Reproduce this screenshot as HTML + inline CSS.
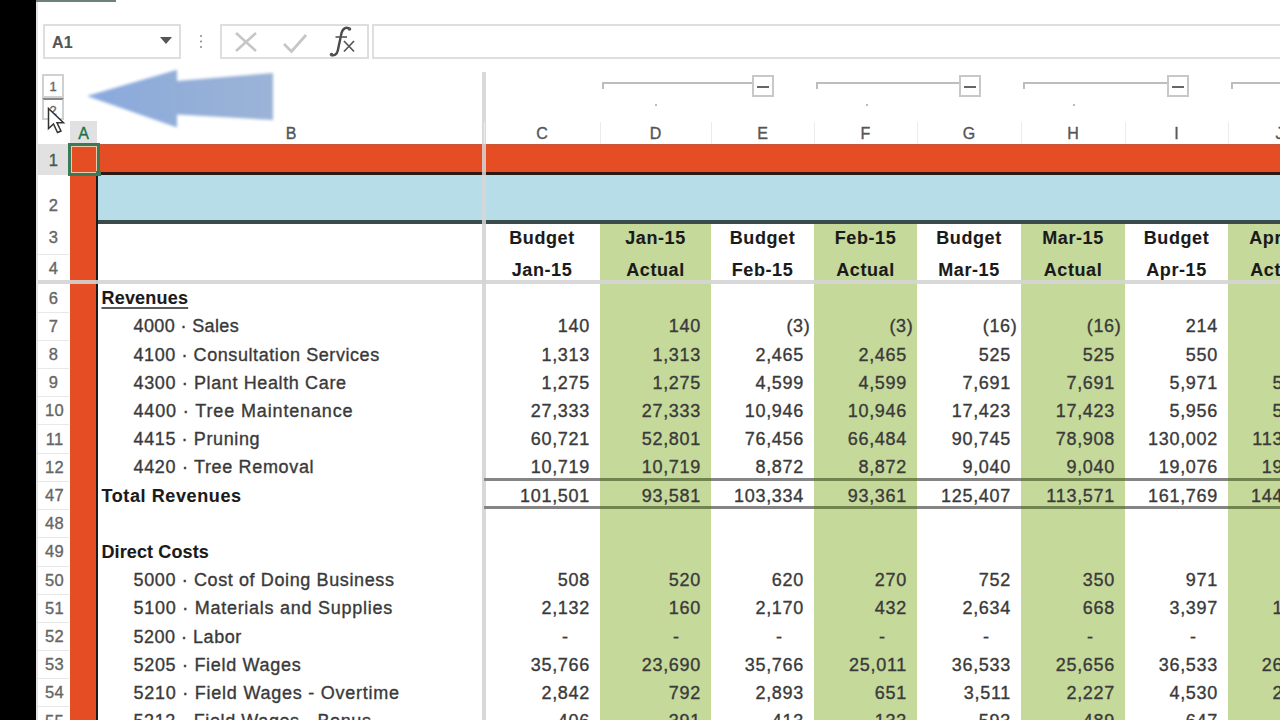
<!DOCTYPE html>
<html><head><meta charset="utf-8">
<style>
html,body{margin:0;padding:0;}
body{width:1280px;height:720px;overflow:hidden;position:relative;background:#fff;font-family:"Liberation Sans",sans-serif;}
.r{position:absolute;}
.t{position:absolute;white-space:nowrap;line-height:20px;-webkit-text-stroke:0.35px currentColor;}
</style></head><body>
<div class="r" style="left:0px;top:0px;width:36px;height:720px;background:#000;"></div>
<div class="r" style="left:36px;top:0px;width:2px;height:720px;background:#e3e3e3;"></div>
<div class="r" style="left:36px;top:0px;width:80px;height:2px;background:#6d8377;"></div>
<div class="r" style="left:43px;top:24px;width:134px;height:31px;border:2px solid #dedede;background:#fff;"></div>
<div class="t" style="left:52.0px;top:32.5px;font-size:16px;letter-spacing:0.2px;color:#555;font-weight:bold;-webkit-text-stroke:0.1px currentColor;">A1</div>
<svg class="r" style="left:160px;top:37px" width="12" height="8"><polygon points="0,0 12,0 6,7" fill="#555"/></svg>
<svg class="r" style="left:199px;top:34px" width="4" height="16"><circle cx="2" cy="2" r="1" fill="#888"/><circle cx="2" cy="7.5" r="1" fill="#888"/><circle cx="2" cy="13" r="1" fill="#888"/></svg>
<div class="r" style="left:220px;top:24px;width:145px;height:31px;border:2px solid #dedede;background:#fff;"></div>
<svg class="r" style="left:232px;top:30px" width="28" height="24"><path d="M4,3 L24,21 M24,3 L4,21" stroke="#c6c6c6" stroke-width="2.6"/></svg>
<svg class="r" style="left:281px;top:30px" width="30" height="24"><path d="M3,14 L10.5,21.5 L25,5" stroke="#c6c6c6" stroke-width="2.8" fill="none"/></svg>
<svg class="r" style="left:0;top:0" width="400" height="70"><path d="M350,29.5 C347,26.5 343,27.5 341.5,33 L337.8,50.5 C337,54 334.5,56 331,55" stroke="#4a4a4a" stroke-width="2.4" fill="none"/><circle cx="349.5" cy="29" r="1.8" fill="#555"/><circle cx="331.5" cy="54.5" r="1.8" fill="#555"/><path d="M335.5,37 L347,37" stroke="#555" stroke-width="1.6"/><path d="M344,41 L354,51.5 M354,41 L344,51.5" stroke="#555" stroke-width="1.7"/></svg>
<div class="r" style="left:372px;top:24px;width:920px;height:31px;border:2px solid #dedede;background:#fff;"></div>
<div class="r" style="left:42px;top:74px;width:18px;height:20px;border:2px solid #d0d0d0;background:#fff;"></div>
<div class="r" style="left:42px;top:98px;width:18px;height:18px;border:2px solid #d0d0d0;border-top:2px solid #888;background:#fff;"></div>
<div class="t" style="left:-97.0px;width:300px;text-align:center;top:77.0px;font-size:13px;letter-spacing:0px;color:#666;">1</div>
<div class="t" style="left:-97.0px;width:300px;text-align:center;top:100.5px;font-size:13px;letter-spacing:0px;color:#666;">2</div>
<div class="r" style="left:602px;top:82px;width:150px;height:2px;background:#bdbdbd;"></div>
<div class="r" style="left:602px;top:82px;width:2px;height:7px;background:#bdbdbd;"></div>
<div class="r" style="left:752px;top:75px;width:18px;height:18px;border:2px solid #c8c8c8;background:#fff;"></div>
<div class="r" style="left:757px;top:86px;width:12px;height:2px;background:#666;"></div>
<div class="r" style="left:816px;top:82px;width:143px;height:2px;background:#bdbdbd;"></div>
<div class="r" style="left:816px;top:82px;width:2px;height:7px;background:#bdbdbd;"></div>
<div class="r" style="left:959px;top:75px;width:18px;height:18px;border:2px solid #c8c8c8;background:#fff;"></div>
<div class="r" style="left:964px;top:86px;width:12px;height:2px;background:#666;"></div>
<div class="r" style="left:1023px;top:82px;width:144px;height:2px;background:#bdbdbd;"></div>
<div class="r" style="left:1023px;top:82px;width:2px;height:7px;background:#bdbdbd;"></div>
<div class="r" style="left:1167px;top:75px;width:18px;height:18px;border:2px solid #c8c8c8;background:#fff;"></div>
<div class="r" style="left:1172px;top:86px;width:12px;height:2px;background:#666;"></div>
<div class="r" style="left:1231px;top:82px;width:144px;height:2px;background:#bdbdbd;"></div>
<div class="r" style="left:1231px;top:82px;width:2px;height:7px;background:#bdbdbd;"></div>
<div class="r" style="left:1375px;top:75px;width:18px;height:18px;border:2px solid #c8c8c8;background:#fff;"></div>
<div class="r" style="left:1380px;top:86px;width:12px;height:2px;background:#666;"></div>
<div class="r" style="left:655px;top:104px;width:2px;height:2px;background:#bbb;"></div>
<div class="r" style="left:866px;top:104px;width:2px;height:2px;background:#bbb;"></div>
<div class="r" style="left:1073px;top:104px;width:2px;height:2px;background:#bbb;"></div>
<div class="r" style="left:482px;top:72px;width:4px;height:648px;background:#d9d9d9;"></div>
<div class="r" style="left:70px;top:121px;width:27px;height:23px;background:#e1e1e1;"></div>
<div class="t" style="left:-66.5px;width:300px;text-align:center;top:123.5px;font-size:16px;letter-spacing:0px;color:#217346;">A</div>
<div class="t" style="left:392.0px;width:300px;text-align:center;top:124.0px;font-size:16px;letter-spacing:0px;color:#555;">C</div>
<div class="r" style="left:484px;top:122px;width:1px;height:22px;background:#ececec;"></div>
<div class="t" style="left:505.5px;width:300px;text-align:center;top:124.0px;font-size:16px;letter-spacing:0px;color:#555;">D</div>
<div class="r" style="left:600px;top:122px;width:1px;height:22px;background:#ececec;"></div>
<div class="t" style="left:612.5px;width:300px;text-align:center;top:124.0px;font-size:16px;letter-spacing:0px;color:#555;">E</div>
<div class="r" style="left:711px;top:122px;width:1px;height:22px;background:#ececec;"></div>
<div class="t" style="left:715.5px;width:300px;text-align:center;top:124.0px;font-size:16px;letter-spacing:0px;color:#555;">F</div>
<div class="r" style="left:814px;top:122px;width:1px;height:22px;background:#ececec;"></div>
<div class="t" style="left:819.0px;width:300px;text-align:center;top:124.0px;font-size:16px;letter-spacing:0px;color:#555;">G</div>
<div class="r" style="left:917px;top:122px;width:1px;height:22px;background:#ececec;"></div>
<div class="t" style="left:923.0px;width:300px;text-align:center;top:124.0px;font-size:16px;letter-spacing:0px;color:#555;">H</div>
<div class="r" style="left:1021px;top:122px;width:1px;height:22px;background:#ececec;"></div>
<div class="t" style="left:1026.5px;width:300px;text-align:center;top:124.0px;font-size:16px;letter-spacing:0px;color:#555;">I</div>
<div class="r" style="left:1125px;top:122px;width:1px;height:22px;background:#ececec;"></div>
<div class="t" style="left:1129.5px;width:300px;text-align:center;top:124.0px;font-size:16px;letter-spacing:0px;color:#555;">J</div>
<div class="r" style="left:1228px;top:122px;width:1px;height:22px;background:#ececec;"></div>
<div class="t" style="left:141.0px;width:300px;text-align:center;top:124.0px;font-size:16px;letter-spacing:0px;color:#555;">B</div>
<div class="r" style="left:38px;top:144px;width:31px;height:31px;background:#e1e1e1;"></div>
<div class="r" style="left:70px;top:144px;width:1210px;height:28px;background:#e54d25;"></div>
<div class="r" style="left:98px;top:144px;width:1182px;height:2px;background:#c9553a;"></div>
<div class="r" style="left:98px;top:172px;width:1182px;height:3px;background:#2b1a14;"></div>
<div class="r" style="left:98px;top:175px;width:1182px;height:45px;background:#b7dee8;"></div>
<div class="r" style="left:98px;top:220px;width:1182px;height:4px;background:#3b4b4b;"></div>
<div class="r" style="left:70px;top:144px;width:27px;height:576px;background:#e54d25;"></div>
<div class="r" style="left:96px;top:172px;width:2px;height:548px;background:#1a1a1a;"></div>
<div class="r" style="left:600px;top:224px;width:111px;height:496px;background:#c5d99b;"></div>
<div class="r" style="left:814px;top:224px;width:103px;height:496px;background:#c5d99b;"></div>
<div class="r" style="left:1021px;top:224px;width:104px;height:496px;background:#c5d99b;"></div>
<div class="r" style="left:1228px;top:224px;width:103px;height:496px;background:#c5d99b;"></div>
<div class="r" style="left:482px;top:144px;width:4px;height:576px;background:rgba(215,215,215,0.85);"></div>
<div class="r" style="left:38px;top:280px;width:1242px;height:4px;background:rgba(212,212,212,0.9);"></div>
<div class="t" style="left:-96.5px;width:300px;text-align:center;top:150.1px;font-size:16.5px;letter-spacing:0.3px;color:#3f5f4c;">1</div>
<div class="t" style="left:-96.5px;width:300px;text-align:center;top:194.6px;font-size:16.5px;letter-spacing:0.3px;color:#666;">2</div>
<div class="t" style="left:-96.5px;width:300px;text-align:center;top:227.0px;font-size:16.5px;letter-spacing:0.3px;color:#666;">3</div>
<div class="t" style="left:-96.5px;width:300px;text-align:center;top:257.7px;font-size:16.5px;letter-spacing:0.3px;color:#666;">4</div>
<div class="t" style="left:-96.5px;width:300px;text-align:center;top:287.5px;font-size:16.5px;letter-spacing:0.3px;color:#666;">6</div>
<div class="t" style="left:-96.5px;width:300px;text-align:center;top:315.7px;font-size:16.5px;letter-spacing:0.3px;color:#666;">7</div>
<div class="t" style="left:-96.5px;width:300px;text-align:center;top:343.9px;font-size:16.5px;letter-spacing:0.3px;color:#666;">8</div>
<div class="t" style="left:-96.5px;width:300px;text-align:center;top:372.1px;font-size:16.5px;letter-spacing:0.3px;color:#666;">9</div>
<div class="t" style="left:-95.5px;width:300px;text-align:center;top:400.3px;font-size:16.5px;letter-spacing:0.3px;color:#666;">10</div>
<div class="t" style="left:-95.5px;width:300px;text-align:center;top:428.5px;font-size:16.5px;letter-spacing:0.3px;color:#666;">11</div>
<div class="t" style="left:-95.5px;width:300px;text-align:center;top:456.7px;font-size:16.5px;letter-spacing:0.3px;color:#666;">12</div>
<div class="t" style="left:-95.5px;width:300px;text-align:center;top:484.9px;font-size:16.5px;letter-spacing:0.3px;color:#666;">47</div>
<div class="t" style="left:-95.5px;width:300px;text-align:center;top:513.1px;font-size:16.5px;letter-spacing:0.3px;color:#666;">48</div>
<div class="t" style="left:-95.5px;width:300px;text-align:center;top:541.3px;font-size:16.5px;letter-spacing:0.3px;color:#666;">49</div>
<div class="t" style="left:-95.5px;width:300px;text-align:center;top:569.5px;font-size:16.5px;letter-spacing:0.3px;color:#666;">50</div>
<div class="t" style="left:-95.5px;width:300px;text-align:center;top:597.7px;font-size:16.5px;letter-spacing:0.3px;color:#666;">51</div>
<div class="t" style="left:-95.5px;width:300px;text-align:center;top:625.9px;font-size:16.5px;letter-spacing:0.3px;color:#666;">52</div>
<div class="t" style="left:-95.5px;width:300px;text-align:center;top:654.1px;font-size:16.5px;letter-spacing:0.3px;color:#666;">53</div>
<div class="t" style="left:-95.5px;width:300px;text-align:center;top:682.3px;font-size:16.5px;letter-spacing:0.3px;color:#666;">54</div>
<div class="t" style="left:-95.5px;width:300px;text-align:center;top:710.5px;font-size:16.5px;letter-spacing:0.3px;color:#666;">55</div>
<div class="r" style="left:38px;top:254px;width:31px;height:1px;background:#e8e8e8;"></div>
<div class="r" style="left:38px;top:312px;width:31px;height:1px;background:#e8e8e8;"></div>
<div class="r" style="left:38px;top:340px;width:31px;height:1px;background:#e8e8e8;"></div>
<div class="r" style="left:38px;top:368px;width:31px;height:1px;background:#e8e8e8;"></div>
<div class="r" style="left:38px;top:396px;width:31px;height:1px;background:#e8e8e8;"></div>
<div class="r" style="left:38px;top:424px;width:31px;height:1px;background:#e8e8e8;"></div>
<div class="r" style="left:38px;top:453px;width:31px;height:1px;background:#e8e8e8;"></div>
<div class="r" style="left:38px;top:481px;width:31px;height:1px;background:#e8e8e8;"></div>
<div class="r" style="left:38px;top:509px;width:31px;height:1px;background:#e8e8e8;"></div>
<div class="r" style="left:38px;top:537px;width:31px;height:1px;background:#e8e8e8;"></div>
<div class="r" style="left:38px;top:566px;width:31px;height:1px;background:#e8e8e8;"></div>
<div class="r" style="left:38px;top:594px;width:31px;height:1px;background:#e8e8e8;"></div>
<div class="r" style="left:38px;top:622px;width:31px;height:1px;background:#e8e8e8;"></div>
<div class="r" style="left:38px;top:650px;width:31px;height:1px;background:#e8e8e8;"></div>
<div class="r" style="left:38px;top:678px;width:31px;height:1px;background:#e8e8e8;"></div>
<div class="r" style="left:38px;top:706px;width:31px;height:1px;background:#e8e8e8;"></div>
<div class="r" style="left:38px;top:735px;width:31px;height:1px;background:#e8e8e8;"></div>
<div class="t" style="left:392.0px;width:300px;text-align:center;top:227.6px;font-size:18px;letter-spacing:0.6px;color:#1a1a1a;font-weight:bold;-webkit-text-stroke:0.1px currentColor;">Budget</div>
<div class="t" style="left:392.0px;width:300px;text-align:center;top:259.7px;font-size:18px;letter-spacing:0.6px;color:#1a1a1a;font-weight:bold;-webkit-text-stroke:0.1px currentColor;">Jan-15</div>
<div class="t" style="left:505.5px;width:300px;text-align:center;top:227.6px;font-size:18px;letter-spacing:0.6px;color:#1a1a1a;font-weight:bold;-webkit-text-stroke:0.1px currentColor;">Jan-15</div>
<div class="t" style="left:505.5px;width:300px;text-align:center;top:259.7px;font-size:18px;letter-spacing:0.6px;color:#1a1a1a;font-weight:bold;-webkit-text-stroke:0.1px currentColor;">Actual</div>
<div class="t" style="left:612.5px;width:300px;text-align:center;top:227.6px;font-size:18px;letter-spacing:0.6px;color:#1a1a1a;font-weight:bold;-webkit-text-stroke:0.1px currentColor;">Budget</div>
<div class="t" style="left:612.5px;width:300px;text-align:center;top:259.7px;font-size:18px;letter-spacing:0.6px;color:#1a1a1a;font-weight:bold;-webkit-text-stroke:0.1px currentColor;">Feb-15</div>
<div class="t" style="left:715.5px;width:300px;text-align:center;top:227.6px;font-size:18px;letter-spacing:0.6px;color:#1a1a1a;font-weight:bold;-webkit-text-stroke:0.1px currentColor;">Feb-15</div>
<div class="t" style="left:715.5px;width:300px;text-align:center;top:259.7px;font-size:18px;letter-spacing:0.6px;color:#1a1a1a;font-weight:bold;-webkit-text-stroke:0.1px currentColor;">Actual</div>
<div class="t" style="left:819.0px;width:300px;text-align:center;top:227.6px;font-size:18px;letter-spacing:0.6px;color:#1a1a1a;font-weight:bold;-webkit-text-stroke:0.1px currentColor;">Budget</div>
<div class="t" style="left:819.0px;width:300px;text-align:center;top:259.7px;font-size:18px;letter-spacing:0.6px;color:#1a1a1a;font-weight:bold;-webkit-text-stroke:0.1px currentColor;">Mar-15</div>
<div class="t" style="left:923.0px;width:300px;text-align:center;top:227.6px;font-size:18px;letter-spacing:0.6px;color:#1a1a1a;font-weight:bold;-webkit-text-stroke:0.1px currentColor;">Mar-15</div>
<div class="t" style="left:923.0px;width:300px;text-align:center;top:259.7px;font-size:18px;letter-spacing:0.6px;color:#1a1a1a;font-weight:bold;-webkit-text-stroke:0.1px currentColor;">Actual</div>
<div class="t" style="left:1026.5px;width:300px;text-align:center;top:227.6px;font-size:18px;letter-spacing:0.6px;color:#1a1a1a;font-weight:bold;-webkit-text-stroke:0.1px currentColor;">Budget</div>
<div class="t" style="left:1026.5px;width:300px;text-align:center;top:259.7px;font-size:18px;letter-spacing:0.6px;color:#1a1a1a;font-weight:bold;-webkit-text-stroke:0.1px currentColor;">Apr-15</div>
<div class="t" style="left:1129.5px;width:300px;text-align:center;top:227.6px;font-size:18px;letter-spacing:0.6px;color:#1a1a1a;font-weight:bold;-webkit-text-stroke:0.1px currentColor;">Apr-15</div>
<div class="t" style="left:1129.5px;width:300px;text-align:center;top:259.7px;font-size:18px;letter-spacing:0.6px;color:#1a1a1a;font-weight:bold;-webkit-text-stroke:0.1px currentColor;">Actual</div>
<div class="t" style="left:101.5px;top:288.2px;font-size:18px;letter-spacing:0.2px;color:#1a1a1a;font-weight:bold;-webkit-text-stroke:0.1px currentColor;text-decoration:underline;text-decoration-color:#5a5a5a;text-underline-offset:3px;text-decoration-thickness:2px;">Revenues</div>
<div class="t" style="left:133.5px;top:316.4px;font-size:18px;letter-spacing:0.38px;color:#3a3a3a;">4000 · Sales</div>
<div class="t" style="left:290.0px;width:300px;text-align:right;top:316.4px;font-size:18px;letter-spacing:0.7px;color:#3a3a3a;">140</div>
<div class="t" style="left:401.0px;width:300px;text-align:right;top:316.4px;font-size:18px;letter-spacing:0.7px;color:#3a3a3a;">140</div>
<div class="t" style="left:510.5px;width:300px;text-align:right;top:316.4px;font-size:18px;letter-spacing:0.7px;color:#3a3a3a;">(3)</div>
<div class="t" style="left:613.5px;width:300px;text-align:right;top:316.4px;font-size:18px;letter-spacing:0.7px;color:#3a3a3a;">(3)</div>
<div class="t" style="left:717.5px;width:300px;text-align:right;top:316.4px;font-size:18px;letter-spacing:0.7px;color:#3a3a3a;">(16)</div>
<div class="t" style="left:821.5px;width:300px;text-align:right;top:316.4px;font-size:18px;letter-spacing:0.7px;color:#3a3a3a;">(16)</div>
<div class="t" style="left:918.0px;width:300px;text-align:right;top:316.4px;font-size:18px;letter-spacing:0.7px;color:#3a3a3a;">214</div>
<div class="t" style="left:1021.0px;width:300px;text-align:right;top:316.4px;font-size:18px;letter-spacing:0.7px;color:#3a3a3a;">214</div>
<div class="t" style="left:133.5px;top:344.6px;font-size:18px;letter-spacing:0.577px;color:#3a3a3a;">4100 · Consultation Services</div>
<div class="t" style="left:290.0px;width:300px;text-align:right;top:344.6px;font-size:18px;letter-spacing:0.7px;color:#3a3a3a;">1,313</div>
<div class="t" style="left:401.0px;width:300px;text-align:right;top:344.6px;font-size:18px;letter-spacing:0.7px;color:#3a3a3a;">1,313</div>
<div class="t" style="left:504.0px;width:300px;text-align:right;top:344.6px;font-size:18px;letter-spacing:0.7px;color:#3a3a3a;">2,465</div>
<div class="t" style="left:607.0px;width:300px;text-align:right;top:344.6px;font-size:18px;letter-spacing:0.7px;color:#3a3a3a;">2,465</div>
<div class="t" style="left:711.0px;width:300px;text-align:right;top:344.6px;font-size:18px;letter-spacing:0.7px;color:#3a3a3a;">525</div>
<div class="t" style="left:815.0px;width:300px;text-align:right;top:344.6px;font-size:18px;letter-spacing:0.7px;color:#3a3a3a;">525</div>
<div class="t" style="left:918.0px;width:300px;text-align:right;top:344.6px;font-size:18px;letter-spacing:0.7px;color:#3a3a3a;">550</div>
<div class="t" style="left:1021.0px;width:300px;text-align:right;top:344.6px;font-size:18px;letter-spacing:0.7px;color:#3a3a3a;">550</div>
<div class="t" style="left:133.5px;top:372.8px;font-size:18px;letter-spacing:0.626px;color:#3a3a3a;">4300 · Plant Health Care</div>
<div class="t" style="left:290.0px;width:300px;text-align:right;top:372.8px;font-size:18px;letter-spacing:0.7px;color:#3a3a3a;">1,275</div>
<div class="t" style="left:401.0px;width:300px;text-align:right;top:372.8px;font-size:18px;letter-spacing:0.7px;color:#3a3a3a;">1,275</div>
<div class="t" style="left:504.0px;width:300px;text-align:right;top:372.8px;font-size:18px;letter-spacing:0.7px;color:#3a3a3a;">4,599</div>
<div class="t" style="left:607.0px;width:300px;text-align:right;top:372.8px;font-size:18px;letter-spacing:0.7px;color:#3a3a3a;">4,599</div>
<div class="t" style="left:711.0px;width:300px;text-align:right;top:372.8px;font-size:18px;letter-spacing:0.7px;color:#3a3a3a;">7,691</div>
<div class="t" style="left:815.0px;width:300px;text-align:right;top:372.8px;font-size:18px;letter-spacing:0.7px;color:#3a3a3a;">7,691</div>
<div class="t" style="left:918.0px;width:300px;text-align:right;top:372.8px;font-size:18px;letter-spacing:0.7px;color:#3a3a3a;">5,971</div>
<div class="t" style="left:1021.0px;width:300px;text-align:right;top:372.8px;font-size:18px;letter-spacing:0.7px;color:#3a3a3a;">5,971</div>
<div class="t" style="left:133.5px;top:401.0px;font-size:18px;letter-spacing:0.863px;color:#3a3a3a;">4400 · Tree Maintenance</div>
<div class="t" style="left:290.0px;width:300px;text-align:right;top:401.0px;font-size:18px;letter-spacing:0.7px;color:#3a3a3a;">27,333</div>
<div class="t" style="left:401.0px;width:300px;text-align:right;top:401.0px;font-size:18px;letter-spacing:0.7px;color:#3a3a3a;">27,333</div>
<div class="t" style="left:504.0px;width:300px;text-align:right;top:401.0px;font-size:18px;letter-spacing:0.7px;color:#3a3a3a;">10,946</div>
<div class="t" style="left:607.0px;width:300px;text-align:right;top:401.0px;font-size:18px;letter-spacing:0.7px;color:#3a3a3a;">10,946</div>
<div class="t" style="left:711.0px;width:300px;text-align:right;top:401.0px;font-size:18px;letter-spacing:0.7px;color:#3a3a3a;">17,423</div>
<div class="t" style="left:815.0px;width:300px;text-align:right;top:401.0px;font-size:18px;letter-spacing:0.7px;color:#3a3a3a;">17,423</div>
<div class="t" style="left:918.0px;width:300px;text-align:right;top:401.0px;font-size:18px;letter-spacing:0.7px;color:#3a3a3a;">5,956</div>
<div class="t" style="left:1021.0px;width:300px;text-align:right;top:401.0px;font-size:18px;letter-spacing:0.7px;color:#3a3a3a;">5,956</div>
<div class="t" style="left:133.5px;top:429.2px;font-size:18px;letter-spacing:0.615px;color:#3a3a3a;">4415 · Pruning</div>
<div class="t" style="left:290.0px;width:300px;text-align:right;top:429.2px;font-size:18px;letter-spacing:0.7px;color:#3a3a3a;">60,721</div>
<div class="t" style="left:401.0px;width:300px;text-align:right;top:429.2px;font-size:18px;letter-spacing:0.7px;color:#3a3a3a;">52,801</div>
<div class="t" style="left:504.0px;width:300px;text-align:right;top:429.2px;font-size:18px;letter-spacing:0.7px;color:#3a3a3a;">76,456</div>
<div class="t" style="left:607.0px;width:300px;text-align:right;top:429.2px;font-size:18px;letter-spacing:0.7px;color:#3a3a3a;">66,484</div>
<div class="t" style="left:711.0px;width:300px;text-align:right;top:429.2px;font-size:18px;letter-spacing:0.7px;color:#3a3a3a;">90,745</div>
<div class="t" style="left:815.0px;width:300px;text-align:right;top:429.2px;font-size:18px;letter-spacing:0.7px;color:#3a3a3a;">78,908</div>
<div class="t" style="left:918.0px;width:300px;text-align:right;top:429.2px;font-size:18px;letter-spacing:0.7px;color:#3a3a3a;">130,002</div>
<div class="t" style="left:1021.0px;width:300px;text-align:right;top:429.2px;font-size:18px;letter-spacing:0.7px;color:#3a3a3a;">113,502</div>
<div class="t" style="left:133.5px;top:457.4px;font-size:18px;letter-spacing:0.668px;color:#3a3a3a;">4420 · Tree Removal</div>
<div class="t" style="left:290.0px;width:300px;text-align:right;top:457.4px;font-size:18px;letter-spacing:0.7px;color:#3a3a3a;">10,719</div>
<div class="t" style="left:401.0px;width:300px;text-align:right;top:457.4px;font-size:18px;letter-spacing:0.7px;color:#3a3a3a;">10,719</div>
<div class="t" style="left:504.0px;width:300px;text-align:right;top:457.4px;font-size:18px;letter-spacing:0.7px;color:#3a3a3a;">8,872</div>
<div class="t" style="left:607.0px;width:300px;text-align:right;top:457.4px;font-size:18px;letter-spacing:0.7px;color:#3a3a3a;">8,872</div>
<div class="t" style="left:711.0px;width:300px;text-align:right;top:457.4px;font-size:18px;letter-spacing:0.7px;color:#3a3a3a;">9,040</div>
<div class="t" style="left:815.0px;width:300px;text-align:right;top:457.4px;font-size:18px;letter-spacing:0.7px;color:#3a3a3a;">9,040</div>
<div class="t" style="left:918.0px;width:300px;text-align:right;top:457.4px;font-size:18px;letter-spacing:0.7px;color:#3a3a3a;">19,076</div>
<div class="t" style="left:1021.0px;width:300px;text-align:right;top:457.4px;font-size:18px;letter-spacing:0.7px;color:#3a3a3a;">19,076</div>
<div class="t" style="left:101.5px;top:485.6px;font-size:18px;letter-spacing:0.6px;color:#1a1a1a;font-weight:bold;-webkit-text-stroke:0.1px currentColor;">Total Revenues</div>
<div class="t" style="left:290.0px;width:300px;text-align:right;top:485.6px;font-size:18px;letter-spacing:0.7px;color:#3a3a3a;">101,501</div>
<div class="t" style="left:401.0px;width:300px;text-align:right;top:485.6px;font-size:18px;letter-spacing:0.7px;color:#3a3a3a;">93,581</div>
<div class="t" style="left:504.0px;width:300px;text-align:right;top:485.6px;font-size:18px;letter-spacing:0.7px;color:#3a3a3a;">103,334</div>
<div class="t" style="left:607.0px;width:300px;text-align:right;top:485.6px;font-size:18px;letter-spacing:0.7px;color:#3a3a3a;">93,361</div>
<div class="t" style="left:711.0px;width:300px;text-align:right;top:485.6px;font-size:18px;letter-spacing:0.7px;color:#3a3a3a;">125,407</div>
<div class="t" style="left:815.0px;width:300px;text-align:right;top:485.6px;font-size:18px;letter-spacing:0.7px;color:#3a3a3a;">113,571</div>
<div class="t" style="left:918.0px;width:300px;text-align:right;top:485.6px;font-size:18px;letter-spacing:0.7px;color:#3a3a3a;">161,769</div>
<div class="t" style="left:1021.0px;width:300px;text-align:right;top:485.6px;font-size:18px;letter-spacing:0.7px;color:#3a3a3a;">144,270</div>
<div class="t" style="left:101.5px;top:542.0px;font-size:18px;letter-spacing:0.11px;color:#1a1a1a;font-weight:bold;-webkit-text-stroke:0.1px currentColor;">Direct Costs</div>
<div class="t" style="left:133.5px;top:570.2px;font-size:18px;letter-spacing:0.62px;color:#3a3a3a;">5000 · Cost of Doing Business</div>
<div class="t" style="left:290.0px;width:300px;text-align:right;top:570.2px;font-size:18px;letter-spacing:0.7px;color:#3a3a3a;">508</div>
<div class="t" style="left:401.0px;width:300px;text-align:right;top:570.2px;font-size:18px;letter-spacing:0.7px;color:#3a3a3a;">520</div>
<div class="t" style="left:504.0px;width:300px;text-align:right;top:570.2px;font-size:18px;letter-spacing:0.7px;color:#3a3a3a;">620</div>
<div class="t" style="left:607.0px;width:300px;text-align:right;top:570.2px;font-size:18px;letter-spacing:0.7px;color:#3a3a3a;">270</div>
<div class="t" style="left:711.0px;width:300px;text-align:right;top:570.2px;font-size:18px;letter-spacing:0.7px;color:#3a3a3a;">752</div>
<div class="t" style="left:815.0px;width:300px;text-align:right;top:570.2px;font-size:18px;letter-spacing:0.7px;color:#3a3a3a;">350</div>
<div class="t" style="left:918.0px;width:300px;text-align:right;top:570.2px;font-size:18px;letter-spacing:0.7px;color:#3a3a3a;">971</div>
<div class="t" style="left:1021.0px;width:300px;text-align:right;top:570.2px;font-size:18px;letter-spacing:0.7px;color:#3a3a3a;">480</div>
<div class="t" style="left:133.5px;top:598.4px;font-size:18px;letter-spacing:0.734px;color:#3a3a3a;">5100 · Materials and Supplies</div>
<div class="t" style="left:290.0px;width:300px;text-align:right;top:598.4px;font-size:18px;letter-spacing:0.7px;color:#3a3a3a;">2,132</div>
<div class="t" style="left:401.0px;width:300px;text-align:right;top:598.4px;font-size:18px;letter-spacing:0.7px;color:#3a3a3a;">160</div>
<div class="t" style="left:504.0px;width:300px;text-align:right;top:598.4px;font-size:18px;letter-spacing:0.7px;color:#3a3a3a;">2,170</div>
<div class="t" style="left:607.0px;width:300px;text-align:right;top:598.4px;font-size:18px;letter-spacing:0.7px;color:#3a3a3a;">432</div>
<div class="t" style="left:711.0px;width:300px;text-align:right;top:598.4px;font-size:18px;letter-spacing:0.7px;color:#3a3a3a;">2,634</div>
<div class="t" style="left:815.0px;width:300px;text-align:right;top:598.4px;font-size:18px;letter-spacing:0.7px;color:#3a3a3a;">668</div>
<div class="t" style="left:918.0px;width:300px;text-align:right;top:598.4px;font-size:18px;letter-spacing:0.7px;color:#3a3a3a;">3,397</div>
<div class="t" style="left:1021.0px;width:300px;text-align:right;top:598.4px;font-size:18px;letter-spacing:0.7px;color:#3a3a3a;">1,240</div>
<div class="t" style="left:133.5px;top:626.6px;font-size:18px;letter-spacing:0.508px;color:#3a3a3a;">5200 · Labor</div>
<div class="t" style="left:415.0px;width:300px;text-align:center;top:626.6px;font-size:18px;letter-spacing:0px;color:#3a3a3a;">-</div>
<div class="t" style="left:526.0px;width:300px;text-align:center;top:626.6px;font-size:18px;letter-spacing:0px;color:#3a3a3a;">-</div>
<div class="t" style="left:629.0px;width:300px;text-align:center;top:626.6px;font-size:18px;letter-spacing:0px;color:#3a3a3a;">-</div>
<div class="t" style="left:732.0px;width:300px;text-align:center;top:626.6px;font-size:18px;letter-spacing:0px;color:#3a3a3a;">-</div>
<div class="t" style="left:836.0px;width:300px;text-align:center;top:626.6px;font-size:18px;letter-spacing:0px;color:#3a3a3a;">-</div>
<div class="t" style="left:940.0px;width:300px;text-align:center;top:626.6px;font-size:18px;letter-spacing:0px;color:#3a3a3a;">-</div>
<div class="t" style="left:1043.0px;width:300px;text-align:center;top:626.6px;font-size:18px;letter-spacing:0px;color:#3a3a3a;">-</div>
<div class="t" style="left:1146.0px;width:300px;text-align:center;top:626.6px;font-size:18px;letter-spacing:0px;color:#3a3a3a;">-</div>
<div class="t" style="left:133.5px;top:654.8px;font-size:18px;letter-spacing:0.694px;color:#3a3a3a;">5205 · Field Wages</div>
<div class="t" style="left:290.0px;width:300px;text-align:right;top:654.8px;font-size:18px;letter-spacing:0.7px;color:#3a3a3a;">35,766</div>
<div class="t" style="left:401.0px;width:300px;text-align:right;top:654.8px;font-size:18px;letter-spacing:0.7px;color:#3a3a3a;">23,690</div>
<div class="t" style="left:504.0px;width:300px;text-align:right;top:654.8px;font-size:18px;letter-spacing:0.7px;color:#3a3a3a;">35,766</div>
<div class="t" style="left:607.0px;width:300px;text-align:right;top:654.8px;font-size:18px;letter-spacing:0.7px;color:#3a3a3a;">25,011</div>
<div class="t" style="left:711.0px;width:300px;text-align:right;top:654.8px;font-size:18px;letter-spacing:0.7px;color:#3a3a3a;">36,533</div>
<div class="t" style="left:815.0px;width:300px;text-align:right;top:654.8px;font-size:18px;letter-spacing:0.7px;color:#3a3a3a;">25,656</div>
<div class="t" style="left:918.0px;width:300px;text-align:right;top:654.8px;font-size:18px;letter-spacing:0.7px;color:#3a3a3a;">36,533</div>
<div class="t" style="left:1021.0px;width:300px;text-align:right;top:654.8px;font-size:18px;letter-spacing:0.7px;color:#3a3a3a;">26,120</div>
<div class="t" style="left:133.5px;top:683.0px;font-size:18px;letter-spacing:0.757px;color:#3a3a3a;">5210 · Field Wages - Overtime</div>
<div class="t" style="left:290.0px;width:300px;text-align:right;top:683.0px;font-size:18px;letter-spacing:0.7px;color:#3a3a3a;">2,842</div>
<div class="t" style="left:401.0px;width:300px;text-align:right;top:683.0px;font-size:18px;letter-spacing:0.7px;color:#3a3a3a;">792</div>
<div class="t" style="left:504.0px;width:300px;text-align:right;top:683.0px;font-size:18px;letter-spacing:0.7px;color:#3a3a3a;">2,893</div>
<div class="t" style="left:607.0px;width:300px;text-align:right;top:683.0px;font-size:18px;letter-spacing:0.7px;color:#3a3a3a;">651</div>
<div class="t" style="left:711.0px;width:300px;text-align:right;top:683.0px;font-size:18px;letter-spacing:0.7px;color:#3a3a3a;">3,511</div>
<div class="t" style="left:815.0px;width:300px;text-align:right;top:683.0px;font-size:18px;letter-spacing:0.7px;color:#3a3a3a;">2,227</div>
<div class="t" style="left:918.0px;width:300px;text-align:right;top:683.0px;font-size:18px;letter-spacing:0.7px;color:#3a3a3a;">4,530</div>
<div class="t" style="left:1021.0px;width:300px;text-align:right;top:683.0px;font-size:18px;letter-spacing:0.7px;color:#3a3a3a;">2,140</div>
<div class="t" style="left:133.5px;top:711.2px;font-size:18px;letter-spacing:0.6px;color:#3a3a3a;">5212 · Field Wages - Bonus</div>
<div class="t" style="left:290.0px;width:300px;text-align:right;top:711.2px;font-size:18px;letter-spacing:0.7px;color:#3a3a3a;">406</div>
<div class="t" style="left:401.0px;width:300px;text-align:right;top:711.2px;font-size:18px;letter-spacing:0.7px;color:#3a3a3a;">391</div>
<div class="t" style="left:504.0px;width:300px;text-align:right;top:711.2px;font-size:18px;letter-spacing:0.7px;color:#3a3a3a;">413</div>
<div class="t" style="left:607.0px;width:300px;text-align:right;top:711.2px;font-size:18px;letter-spacing:0.7px;color:#3a3a3a;">133</div>
<div class="t" style="left:711.0px;width:300px;text-align:right;top:711.2px;font-size:18px;letter-spacing:0.7px;color:#3a3a3a;">593</div>
<div class="t" style="left:815.0px;width:300px;text-align:right;top:711.2px;font-size:18px;letter-spacing:0.7px;color:#3a3a3a;">489</div>
<div class="t" style="left:918.0px;width:300px;text-align:right;top:711.2px;font-size:18px;letter-spacing:0.7px;color:#3a3a3a;">647</div>
<div class="t" style="left:1021.0px;width:300px;text-align:right;top:711.2px;font-size:18px;letter-spacing:0.7px;color:#3a3a3a;">410</div>
<div class="r" style="left:484px;top:478px;width:796px;height:3px;background:#858585;"></div>
<div class="r" style="left:600px;top:478px;width:111px;height:3px;background:#71844f;"></div>
<div class="r" style="left:814px;top:478px;width:103px;height:3px;background:#71844f;"></div>
<div class="r" style="left:1021px;top:478px;width:104px;height:3px;background:#71844f;"></div>
<div class="r" style="left:1228px;top:478px;width:52px;height:3px;background:#71844f;"></div>
<div class="r" style="left:484px;top:506px;width:796px;height:3px;background:#858585;"></div>
<div class="r" style="left:600px;top:506px;width:111px;height:3px;background:#71844f;"></div>
<div class="r" style="left:814px;top:506px;width:103px;height:3px;background:#71844f;"></div>
<div class="r" style="left:1021px;top:506px;width:104px;height:3px;background:#71844f;"></div>
<div class="r" style="left:1228px;top:506px;width:52px;height:3px;background:#71844f;"></div>
<div class="r" style="left:68px;top:143px;width:26px;height:27px;border:3px solid #3b7a56;"></div>
<div class="r" style="left:71px;top:146px;width:24px;height:25px;border:1px solid #f3c8a8;"></div>
<div class="r" style="left:96px;top:171px;width:5px;height:5px;background:#3b7a56;"></div>
<svg class="r" style="left:80px;top:62px;filter:blur(1.5px)" width="200" height="72"><defs><linearGradient id="ag" x1="0" x2="1" y1="0" y2="0"><stop offset="0" stop-color="#8aa9de"/><stop offset="0.5" stop-color="#92aed8"/><stop offset="1" stop-color="#9bb3d6"/></linearGradient></defs><polygon points="7,34 97,7.8 97,19 193,11 193,58 97,52.5 97,65.5" fill="url(#ag)"/></svg>
<svg class="r" style="left:47px;top:107px" width="20" height="28"><path d="M1.5,1.5 L1.5,21.5 L6.5,17 L10.5,25.5 L14,24 L10,15.8 L16.5,15.8 Z" fill="#fff" stroke="#333" stroke-width="1.5"/></svg>
</body></html>
